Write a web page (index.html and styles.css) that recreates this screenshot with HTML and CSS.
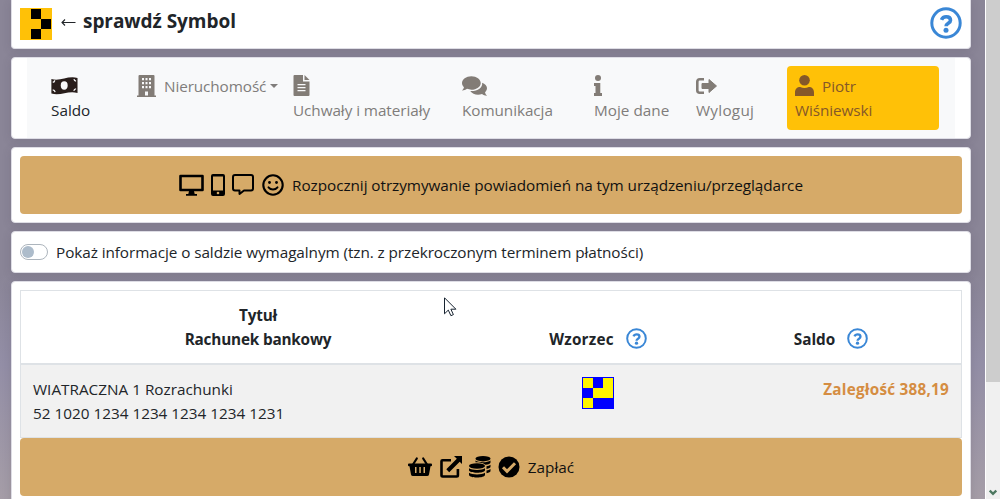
FILE: index.html
```
<!DOCTYPE html>
<html lang="pl">
<head>
<meta charset="utf-8">
<title>Saldo</title>
<link rel="stylesheet" href="styles.css">
</head>
<body>
<div class="viewport">
<main class="page">
  <header class="card header">
    <svg class="symbol" viewBox="0 0 32 32" shape-rendering="crispEdges"><path fill="#ffc107" d="M0 0h32v32H0z"/><path d="M11 1h10v10H11zM21 11h10v10H21zM11 21h10v10H11z"/></svg>
    <h1 class="title"><svg class="arrow" viewBox="0 0 15 10"><path fill="none" stroke="#212529" stroke-width="1.1" d="M14.500 5.500H1.500M4 2.500 1 5.500l3 3"/></svg><span class="title-text">sprawdź Symbol</span></h1>
    <svg class="help help-large" viewBox="0 0 32 32"><circle cx="16" cy="16" r="14.2" fill="none" stroke="#3a87d6" stroke-width="3"/><path fill="none" stroke="#3a87d6" stroke-width="3.6" d="M11.5 12.8c.8-2.1 2.4-3.1 4.7-3.1 2.5 0 4.3 1.3 4.3 3.5 0 3.300-4.400 2.900-4.400 6.100"/><circle cx="16" cy="23.2" r="2.5" fill="#3a87d6"/></svg>
  </header>

  <div class="card nav-card">
    <nav class="nav">
      <a class="item active saldo"><svg class="ico" viewBox="0 0 28 20"><path fill="#281d1a" d="M.4 3.200C9.500 6 17-.4 27.500 2.100v15.700C18 14.800 10 21.200.4 18.300z"/><ellipse cx="13.700" cy="10" rx="3.600" ry="4.300" fill="#f8f9fa"/><path fill="none" stroke="#f8f9fa" stroke-width="1.300" d="M1.800 6.500q2 0 2-2M1.800 14.500q2 .3 2.500 2.300M26 5.500q-1.800-.1-2.200-2M26 13.500q-2 0-2.300 2.100"/></svg><span>Saldo</span></a>
      <a class="item inline estate"><svg class="ico" viewBox="0 0 19 22"><path fill="#827c76" fill-rule="evenodd" d="M1.500 1q0-1 1-1h14q1 0 1 1v19.500H19V22H0v-1.500h1.500zM5 3v2.300h2V3zM8.500 3v2.300h2V3zM12 3v2.300h2V3zM5 7v2.300h2V7zM8.500 7v2.300h2V7zM12 7v2.300h2V7zM5 11v2.300h2V11zM8.500 11v2.300h2V11zM12 11v2.300h2V11zM8 16.500v4h3v-4z"/></svg><span>Nieruchomość</span><i class="caret"></i></a>
      <a class="item files"><svg class="ico" viewBox="0 0 16 21"><path fill="#827c76" fill-rule="evenodd" d="M1 0h8.500v6.500H16V20q0 1-1 1H1q-1 0-1-1V1Q0 0 1 0zM4 9v1.200h8V9zM4 12v1.200h8V12zM4 15v1.200h8V15z"/><path fill="#827c76" d="M11 0l5 5h-5z"/></svg><span>Uchwały i materiały</span></a>
      <a class="item talks"><svg class="ico" viewBox="0 0 24 20"><path fill="#827c76" d="M9 1c5 0 9 2.900 9 6.500S14 14 9 14c-1.500 0-2.900-.3-4.200-.8C3.300 14.300 1.600 14.900 0 14.800c1-1 1.700-2.100 1.900-3.200C.7 10.500 0 9.100 0 7.500 0 3.900 4 1 9 1z"/><path fill="#827c76" d="M19.300 7.300c2.800 1 4.700 3 4.700 5.200 0 1.600-.7 3-1.900 4.100.2 1.100.9 2.100 1.900 3.200-1.700.1-3.300-.5-4.800-1.600-4.200 1.600-9.200.3-11.300-2.900 6.500.5 12.300-3.200 11.400-8z"/></svg><span>Komunikacja</span></a>
      <a class="item data"><svg class="ico" viewBox="0 0 8 21"><circle cx="4" cy="3" r="3" fill="#827c76"/><path fill="#827c76" d="M0 8h6.300v10H8v3H0v-3h1.500v-7H0z"/></svg><span>Moje dane</span></a>
      <a class="item logout"><svg class="ico" viewBox="0 0 21 16"><path fill="none" stroke="#827c76" stroke-width="2.600" d="M8 1.300H3.800q-2.500 0-2.500 2.500v8.400q0 2.500 2.500 2.500H8"/><path fill="#827c76" stroke="#827c76" stroke-linejoin="round" d="M6 5.500h7v-4L20.500 8 13 14.500v-4H6z"/></svg><span>Wyloguj</span></a>
      <a class="item user"><span class="first"><svg class="ico" viewBox="0 0 19 21"><ellipse cx="9.500" cy="5.200" rx="5.300" ry="5.200" fill="#855829"/><path fill="#855829" d="M0 21v-3.500C0 14 2 12 5.200 12c2.700 1.200 5.900 1.200 8.600 0 3.200 0 5.200 2 5.200 5.500V21z"/></svg><span>Piotr</span></span><span class="surname">Wiśniewski</span></a>
    </nav>
  </div>

  <div class="card">
    <a class="button notify">
      <svg class="screen" viewBox="0 0 25 22"><path fill="none" stroke="#000" stroke-width="2.600" stroke-linejoin="round" d="M1.500 2h22v14h-22z"/><path d="M10 17h5l.7 3H18v1.800H7V20h2.300z"/></svg>
      <svg class="phone" viewBox="0 0 14 22"><path fill-rule="evenodd" d="M2 0h10q2 0 2 2v18q0 2-2 2H2q-2 0-2-2V2Q0 0 2 0zM2 2.500v14h10v-14z"/><circle cx="7" cy="19" r="1.300" fill="#d6aa68"/></svg>
      <svg class="bubble" viewBox="0 0 22 22"><path fill="none" stroke="#000" stroke-width="2" stroke-linejoin="round" d="M3 1h16q2 0 2 2v11.500q0 2-2 2h-7L7.500 20v-3.500H3q-2 0-2-2V3q0-2 2-2z"/></svg>
      <svg class="smile" viewBox="0 0 22 22"><circle cx="11" cy="11" r="9.700" fill="none" stroke="#000" stroke-width="2.100"/><circle cx="7.500" cy="8.500" r="1.400"/><circle cx="14.500" cy="8.500" r="1.400"/><path fill="none" stroke="#000" stroke-width="1.900" stroke-linecap="round" d="M6.500 13.300c2.300 2.900 6.700 2.900 9 0"/></svg>
      <span>Rozpocznij otrzymywanie powiadomień na tym urządzeniu/przeglądarce</span>
    </a>
  </div>

  <div class="card option"><span class="switch"></span><span class="option-text">Pokaż informacje o saldzie wymagalnym (tzn. z przekroczonym terminem płatności)</span></div>

  <div class="card balance">
    <div class="table">
      <div class="row head">
        <div class="cell account"><span class="h-title">Tytuł</span><br><span class="h-bank">Rachunek bankowy</span></div>
        <div class="cell pattern"><span class="h-pattern">Wzorzec</span><svg class="help" viewBox="0 0 32 32"><circle cx="16" cy="16" r="14.200" fill="none" stroke="#3a87d6" stroke-width="3"/><path fill="none" stroke="#3a87d6" stroke-width="3.600" d="M11.500 12.800c.8-2.100 2.400-3.100 4.700-3.100 2.500 0 4.300 1.300 4.300 3.500 0 3.300-4.400 2.900-4.400 6.100"/><circle cx="16" cy="23.200" r="2.500" fill="#3a87d6"/></svg></div>
        <div class="cell amount"><span class="h-amount">Saldo</span><svg class="help" viewBox="0 0 32 32"><circle cx="16" cy="16" r="14.200" fill="none" stroke="#3a87d6" stroke-width="3"/><path fill="none" stroke="#3a87d6" stroke-width="3.600" d="M11.500 12.800c.8-2.100 2.400-3.100 4.700-3.100 2.500 0 4.300 1.300 4.300 3.500 0 3.300-4.400 2.900-4.400 6.100"/><circle cx="16" cy="23.200" r="2.500" fill="#3a87d6"/></svg></div>
      </div>
      <div class="row record">
        <div class="cell account"><span class="name">WIATRACZNA 1 Rozrachunki</span><br><span class="number">52 1020 1234 1234 1234 1234 1231</span></div>
        <div class="cell pattern"><svg class="symbol" viewBox="0 0 32 32" shape-rendering="crispEdges"><path fill="#00f" d="M0 0h32v32H0z"/><path fill="#fff500" d="M1 1h10v10H1zM21 1h10v20H11V11h10zM1 21h10v10H1z"/></svg></div>
        <div class="cell amount"><span class="debt">Zaległość 388,19</span></div>
      </div>
    </div>
    <a class="button pay">
      <svg class="basket" viewBox="0 0 24 22"><path fill="none" stroke="#000" stroke-width="2.200" stroke-linecap="round" d="M5 8.500 8.800 2.500M19 8.500 15.200 2.500"/><path fill-rule="evenodd" d="M1 7.500h22q1 0 1 1v.8q0 1-1 1h-.5L21 18.500q-.3 1.500-2 1.500H5q-1.700 0-2-1.500l-1.500-8.200H1q-1 0-1-1v-.8q0-1 1-1zM7 11v6h1.500v-6zM11.300 11v6h1.500v-6zM15.500 11v6H17v-6z"/></svg>
      <svg class="share" viewBox="0 0 22 22"><path fill="none" stroke="#000" stroke-width="2.600" d="M11 4.300H2.500q-1 0-1 1v14q0 1.200 1.200 1.200h14q1.200 0 1.200-1.200V13"/><path d="M14 0h8v8l-2.300-2.300-10.500 10.500-2.900-2.900L16.800 2.800z"/></svg>
      <svg class="coins" viewBox="0 0 22 22"><ellipse cx="14" cy="2.700" rx="7.500" ry="2.700"/><path d="M6.500 4.600c3 2.100 12 2.100 15-.2v2c0 1-2 2.100-5 2.400-2-1.600-5.500-2.200-10-2.200zM17.500 10.300c1.700-.3 3-.8 4-1.500v2c0 1-1.400 1.800-4 2.200zM17.500 14.500c1.700-.3 3-.8 4-1.500v2c0 1-1.400 1.800-4 2.200z"/><ellipse cx="8" cy="10" rx="8.500" ry="3.600" fill="#d6aa68"/><ellipse cx="8" cy="10" rx="8" ry="2.700"/><path d="M0 12.300c3 2.200 13 2.200 16 0v2c0 3.300-16 3.300-16 0zM0 16.800c3 2.200 13 2.200 16 0v2c0 3.700-16 3.700-16 0z"/></svg>
      <svg class="check" viewBox="0 0 22 22"><circle cx="11" cy="11" r="10.500"/><path fill="none" stroke="#d6aa68" stroke-width="3" d="M5 11.300l4 4 8-8"/></svg>
      <span>Zapłać</span>
    </a>
  </div>
</main>
<aside class="scrollbar"><div class="thumb"></div><svg class="down" viewBox="0 0 8 7"><path fill="none" stroke="#4d7860" stroke-width="2.400" d="M.7 1.500 4 4.800l3.300-3.300"/></svg></aside>
</div>
<svg class="pointer" viewBox="0 0 13 20"><path fill="#fff" stroke="#172330" d="M.5.8v16l3.800-3.700 2.600 5.600 2.500-1.100-2.500-5.400h5z"/></svg>
</body>
</html>
```

FILE: styles.css
```
* { box-sizing: border-box; }
body {
  margin: 0;
  height: 499px;
  overflow: hidden;
  font: 15.3px/24px "Open Sans", "Noto Sans", sans-serif;
  color: #212529;
}
svg { display: block; flex: none; }
.viewport { display: flex; height: 499px; }
.page {
  width: 985px;
  height: 499px;
  overflow: hidden;
  padding: 0 14px 0 11px;
  display: flex;
  flex-direction: column;
  gap: 8px;
  background: linear-gradient(#8a8597 0, #8a8597 55%, #938ea6 73%, #a59da7 100%);
}
.card {
  flex: none;
  padding: 8px;
  background: #fff;
  border: 1px solid #dedde5;
  border-radius: 4px;
  box-shadow: 0 2px 10px rgba(55, 50, 65, .15);
}
.header {
  height: 49px;
  border-top: 0;
  border-radius: 0 0 4px 4px;
  display: flex;
  align-items: flex-start;
}
.symbol { width: 32px; height: 32px; }
.title {
  margin: 0 0 0 9px;
  display: flex;
  align-items: center;
  gap: 7px;
  font-size: 19px;
  line-height: 26px;
  font-weight: 700;
}
.title-text { letter-spacing: -.05px; }
.arrow { width: 15px; height: 10px; margin-top: 2px; }
.help { width: 21px; height: 21px; }
.help-large { width: 32px; height: 32px; margin: -1px 0 0 auto; }

.nav-card { height: 82px; padding: 0 15px; }
.nav {
  height: 80px;
  padding: 8px 16px 8px 24px;
  display: flex;
  background: #f8f9fa;
  color: #807d7b;
}
.item {
  display: flex;
  flex-direction: column;
  align-items: flex-start;
  padding-top: 9px;
  white-space: nowrap;
}
.item > span { line-height: 24px; }
.item .ico { height: 21px; margin-bottom: 2px; }
.active { color: #212529; }
.saldo { width: 86px; }
.saldo .ico { width: 27px; }
.estate { width: 156px; }
.estate .ico { width: 19px; height: 22px; margin: 0 8px 0 0; }
.estate span { margin-top: -1px; letter-spacing: -.1px; }
.inline { flex-direction: row; }
.caret {
  margin: 9px 0 0 4px;
  border: 4px solid transparent;
  border-top-color: #807d7b;
  border-bottom: 0;
}
.files { width: 169px; letter-spacing: -.07px; }
.files .ico { width: 17px; }
.talks { width: 132px; letter-spacing: -.07px; }
.talks .ico { width: 25px; }
.data { width: 102px; }
.data .ico { width: 8px; }
.logout { width: 91px; letter-spacing: .25px; }
.logout .ico { width: 21px; height: 18px; margin: 2px 0 3px; }
.user {
  width: 152px;
  height: 64px;
  padding: 8px;
  border-radius: 4px;
  background: #ffc107;
  color: #855829;
}
.first { display: flex; gap: 8px; }
.user .ico { width: 19px; margin: 1px 0 2px; }
.surname { letter-spacing: -.1px; }

.button {
  height: 58px;
  display: flex;
  align-items: center;
  justify-content: center;
  gap: 7px;
  border-radius: 4px;
  background: #d6aa68;
  color: #111;
  white-space: nowrap;
}
.button span { margin-top: -1px; }
.button svg { height: 22px; margin-top: -1px; }
.notify { letter-spacing: -.06px; }
.notify .screen { width: 25px; }
.notify .phone { width: 14px; }
.notify .bubble { width: 22px; margin-right: 1px; }
.notify .smile { width: 22px; margin-right: 1px; }

.option {
  height: 42px;
  display: flex;
  align-items: center;
  gap: 8px;
  letter-spacing: -.07px;
  white-space: nowrap;
}
.switch {
  width: 28px;
  height: 16px;
  padding: 1px;
  border: 1px solid #adb5bd;
  border-radius: 8px;
}
.switch::before {
  content: "";
  display: block;
  width: 12px;
  height: 12px;
  border-radius: 50%;
  background: #adbccb;
}

.balance { height: 224px; }
.table { border: 1px solid #dee2e6; }
.row { display: grid; grid-template-columns: 474px 206px 260px; }
.cell { padding: 12px; white-space: nowrap; }
.head {
  height: 74px;
  border-bottom: 2px solid #dee2e6;
  text-align: center;
  font-weight: 700;
}
.head .pattern, .head .amount {
  display: flex;
  align-items: flex-end;
  justify-content: center;
  gap: 12px;
}
.head .help { margin-bottom: 2px; }
.h-title, .h-bank { letter-spacing: -.18px; }
.h-pattern { letter-spacing: .2px; }
.record { height: 72px; background: #f1f1f1; }
.record .pattern { display: flex; justify-content: center; }
.record .amount { text-align: right; color: #d58d42; font-weight: 700; letter-spacing: .23px; }
.basket { width: 24px; margin-right: 1px; }
.share, .coins, .check { width: 22px; }
.check { margin-right: 1px; }

.scrollbar {
  width: 15px;
  border-left: 1px solid #fff;
  background: #f0f0f0;
  display: flex;
  flex-direction: column;
  align-items: center;
  justify-content: space-between;
}
.thumb { width: 100%; height: 382px; background: #cdcdcd; }
.down { width: 8px; height: 7px; margin-bottom: 3px; }
.pointer { position: absolute; left: 444px; top: 297px; width: 13px; height: 20px; }
```
